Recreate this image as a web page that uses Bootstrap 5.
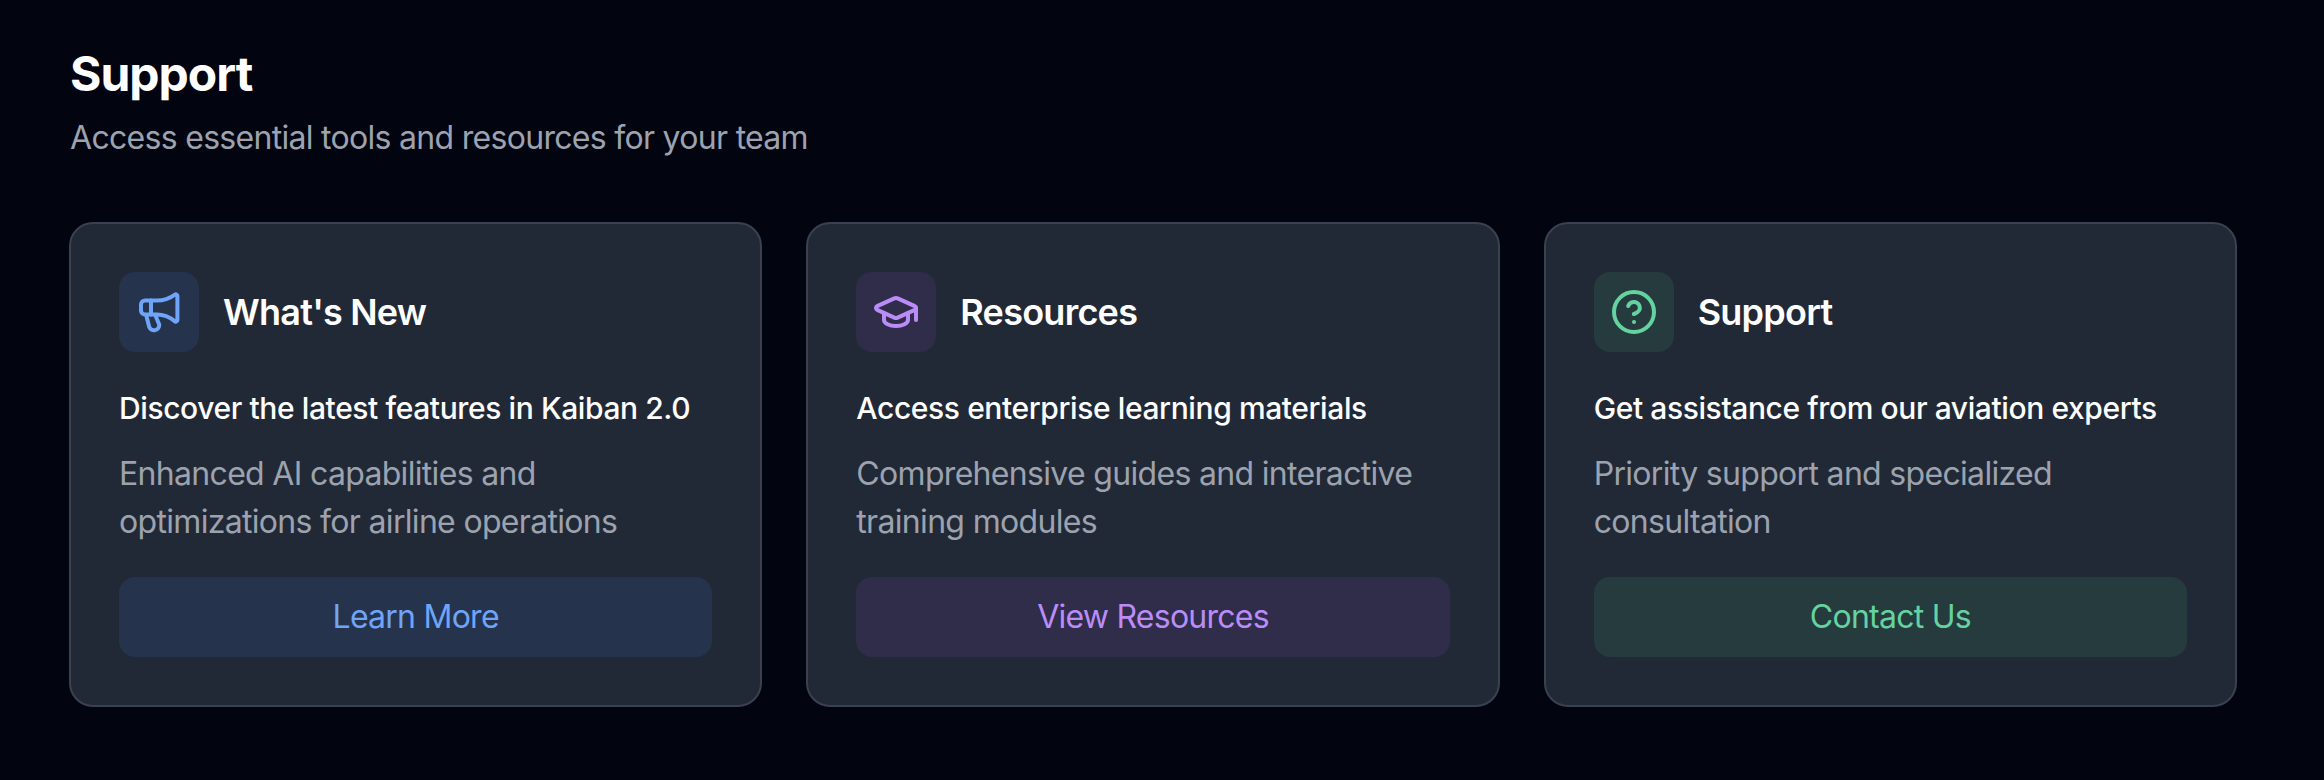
<!DOCTYPE html>
<html lang="en">
<head>
    <meta charset="UTF-8">
    <title>Support</title>
    <link rel="stylesheet" href="https://cdn.jsdelivr.net/npm/bootstrap@5.3.0/dist/css/bootstrap.min.css">
    <style>
        body {
            background: #02040f;
            font-family: Inter, "Liberation Sans", sans-serif;
            color: #fff;
        }
        .support-page {
            padding: 42px 87px 0 69px;
        }
        .page-title {
            font-size: 48px;
            line-height: 64px;
            font-weight: 700;
            letter-spacing: -1px;
            margin: 0 0 8px 1px;
        }
        .page-sub {
            font-size: 32px;
            line-height: 48px;
            letter-spacing: -0.7px;
            color: #9ca3af;
            margin: 0 0 60px 1px;
        }
        .support-grid {
            display: grid;
            grid-template-columns: repeat(3, 1fr);
            gap: 44px;
        }
        .support-card {
            background: #222936;
            border: 2px solid #3a4150;
            border-radius: 24px;
            padding: 48px;
        }
        .icon-box {
            width: 80px;
            height: 80px;
            border-radius: 16px;
        }
        .icon-box svg {
            width: 48px;
            height: 48px;
            fill: none;
            stroke: currentColor;
            stroke-width: 2;
            stroke-linecap: round;
            stroke-linejoin: round;
        }
        .card-name {
            font-size: 36px;
            line-height: 48px;
            font-weight: 600;
            letter-spacing: -0.75px;
            margin: 0 0 0 24px;
        }
        .card-lead {
            font-size: 30px;
            line-height: 40px;
            font-weight: 500;
            letter-spacing: -0.4px;
            margin: 36px 0 0;
        }
        .card-text {
            font-size: 32px;
            line-height: 48px;
            letter-spacing: -0.68px;
            color: #9ca3af;
            margin: 22px 0 31px;
        }
        .card-btn {
            display: block;
            width: 100%;
            height: 80px;
            border: 0;
            border-radius: 16px;
            font-size: 32px;
            line-height: 80px;
            letter-spacing: -0.75px;
            padding: 0;
        }
        .tone-blue { background: #26334c; color: #6ea5f8; }
        .tone-purple { background: #2f2d4a; color: #bb8cf8; }
        .tone-green { background: #263b3e; color: #64d3a0; }
        .card-btn.tone-blue:hover { background: #26334c; color: #6ea5f8; }
        .card-btn.tone-purple:hover { background: #2f2d4a; color: #bb8cf8; }
        .card-btn.tone-green:hover { background: #263b3e; color: #64d3a0; }
    </style>
</head>
<body>
<div class="support-page">
    <h1 class="page-title">Support</h1>
    <p class="page-sub">Access essential tools and resources for your team</p>

    <div class="support-grid">
        <div class="support-card">
            <div class="d-flex align-items-center">
                <div class="icon-box tone-blue d-flex align-items-center justify-content-center">
                    <svg viewBox="0 0 24 24">
                        <path d="M8 6.3H5a2 2 0 0 0-2 2v3a2 2 0 0 0 2 2h3z"/>
                        <path d="M8 6.3h3c3.2 0 6.2-1 9-3a.8.8 0 0 1 1.2.7V16a.8.8 0 0 1-1.2.7c-2.8-2.2-5.8-3.4-9-3.4H8"/>
                        <path d="M5.6 13.5l1.5 6a2.6 2.6 0 0 0 5-1.2l-2-4.8"/>
                    </svg>
                </div>
                <h3 class="card-name">What's New</h3>
            </div>
            <p class="card-lead">Discover the latest features in Kaiban 2.0</p>
            <p class="card-text">Enhanced AI capabilities and optimizations for airline operations</p>
            <button type="button" class="btn card-btn tone-blue">Learn More</button>
        </div>

        <div class="support-card">
            <div class="d-flex align-items-center">
                <div class="icon-box tone-purple d-flex align-items-center justify-content-center">
                    <svg viewBox="0 0 24 24">
                        <path d="M21.42 10.922a1 1 0 0 0-.019-1.838L12.83 5.18a2 2 0 0 0-1.66 0L2.6 9.08a1 1 0 0 0 0 1.832l8.57 3.908a2 2 0 0 0 1.66 0z"/>
                        <path d="M22 10v6"/>
                        <path d="M6 12.5V16a6 3 0 0 0 12 0v-3.5"/>
                    </svg>
                </div>
                <h3 class="card-name">Resources</h3>
            </div>
            <p class="card-lead">Access enterprise learning materials</p>
            <p class="card-text">Comprehensive guides and interactive training modules</p>
            <button type="button" class="btn card-btn tone-purple">View Resources</button>
        </div>

        <div class="support-card">
            <div class="d-flex align-items-center">
                <div class="icon-box tone-green d-flex align-items-center justify-content-center">
                    <svg viewBox="0 0 24 24">
                        <circle cx="12" cy="12" r="10"/>
                        <path d="M9.09 9a3 3 0 0 1 5.83 1c0 2-3 3-3 3"/>
                        <path d="M12 17h.01"/>
                    </svg>
                </div>
                <h3 class="card-name">Support</h3>
            </div>
            <p class="card-lead">Get assistance from our aviation experts</p>
            <p class="card-text">Priority support and specialized consultation</p>
            <button type="button" class="btn card-btn tone-green">Contact Us</button>
        </div>
    </div>
</div>
<script src="https://cdn.jsdelivr.net/npm/bootstrap@5.3.0/dist/js/bootstrap.bundle.min.js"></script>
</body>
</html>
